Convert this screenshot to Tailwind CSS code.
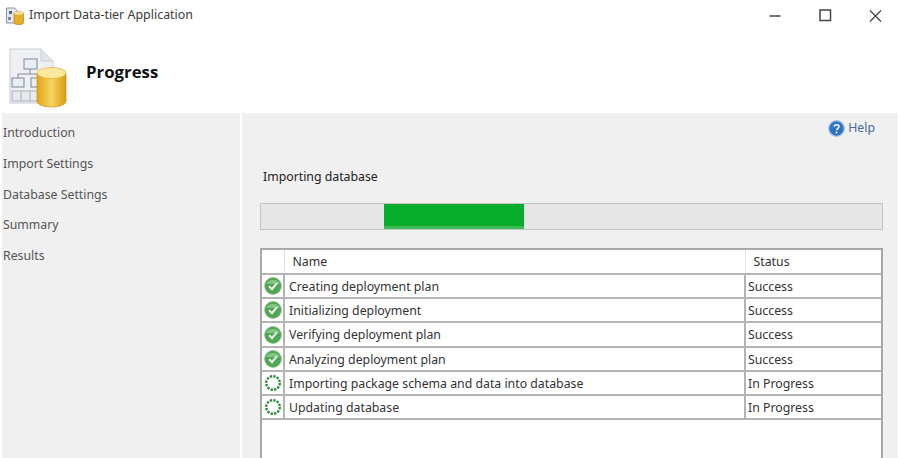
<!DOCTYPE html>
<html lang="en">
<head>
<meta charset="UTF-8">
<title>Import Data-tier Application</title>
<script src="https://cdn.jsdelivr.net/npm/@tailwindcss/browser@4"></script>
</head>
<body class="w-[900px] h-[458px] overflow-hidden bg-white font-['Noto_Sans',sans-serif] text-[12.3px] text-[#333]">
  <!-- title bar -->
  <div class="h-[31px] flex items-center pl-[6px]">
    <svg class="w-[18px] h-[18px]" viewBox="0 0 18 18">
      <path d="M.5 1h8l3 3v12H.5z" fill="#e4e8ee" stroke="#8a94a3"/>
      <rect x="3" y="4" width="3" height="3" fill="#4a6a9a"/>
      <rect x="2" y="10" width="3" height="3" fill="#6f89ad"/>
      <path d="M8 6c0-2 9.500-2 9.500 0v10c0 2-9.500 2-9.500 0z" fill="#e8ac25" stroke="#a87810" stroke-width=".6"/>
      <ellipse cx="12.750" cy="6" rx="4.750" ry="1.800" fill="#f8e39a"/>
    </svg>
    <span class="ml-[5px] text-[12.450px] text-[#3a3a3a]">Import Data-tier Application</span>
    <div class="ml-auto flex items-center gap-[4px] mr-[2px]">
      <svg class="w-[46px] h-[30px]" viewBox="0 0 46 30"><path d="M17.500 15h11" stroke="#444" stroke-width="1.500"/></svg>
      <svg class="w-[46px] h-[30px]" viewBox="0 0 46 30"><rect x="18" y="9" width="10.500" height="10.500" fill="none" stroke="#444" stroke-width="1.500"/></svg>
      <svg class="w-[46px] h-[30px]" viewBox="0 0 46 30"><path d="M18 9.500l11 11M29 9.500l-11 11" stroke="#444" stroke-width="1.200"/></svg>
    </div>
  </div>
  <!-- banner -->
  <div class="h-[82px] flex items-center pl-[9px]">
    <svg class="w-[58px] h-[60px] mt-[11px]" viewBox="0 0 58 60">
      <path d="M1 1h31l12 12v42H1z" fill="#eef0f3" stroke="#c9ccd1"/>
      <path d="M32 1v12h12" fill="#dfe2e6" stroke="#c9ccd1"/>
      <rect x="15" y="11" width="13" height="10" fill="#e8eef6" stroke="#7c8796"/>
      <path d="M21 21v5M9 26h24M9 26v4M33 26v4" stroke="#7c8796" fill="none"/>
      <rect x="3" y="30" width="12" height="9" fill="#e8eef6" stroke="#7c8796"/>
      <rect x="22" y="30" width="12" height="9" fill="#e8eef6" stroke="#7c8796"/>
      <path d="M3 43h27v10H3zM12 43v10M21 43v10" fill="#e8eaee" stroke="#a8afb9"/>
      <defs><linearGradient id="cyl" x1="0" x2="1" y1="0" y2="0"><stop offset="0" stop-color="#e2a516"/><stop offset=".5" stop-color="#f7d460"/><stop offset="1" stop-color="#d99b10"/></linearGradient></defs>
      <path d="M28 25v28c0 8 29 8 29 0V25z" fill="url(#cyl)" stroke="#c08c12" stroke-width=".6"/>
      <ellipse cx="42.500" cy="25" rx="14.500" ry="5.500" fill="#fbe99c" stroke="#d6a42a" stroke-width=".6"/>
    </svg>
    <span class="ml-[19px] font-['Open_Sans',sans-serif] font-bold text-[16.800px] text-[#111]">Progress</span>
  </div>
  <!-- body -->
  <div class="h-[345px] flex">
    <nav class="w-[238px] ml-[2px] mr-[2px] bg-[#f0f0f0] pt-[9px] pl-[1px] flex flex-col gap-[9.750px] text-[#555]">
      <a class="h-[21px] leading-[21px]">Introduction</a>
      <a class="h-[21px] leading-[21px]">Import Settings</a>
      <a class="h-[21px] leading-[21px]">Database Settings</a>
      <a class="h-[21px] leading-[21px]">Summary</a>
      <a class="h-[21px] leading-[21px]">Results</a>
    </nav>
    <main class="w-[656px] bg-[#f0f0f0] pl-[18px] pr-[15px] flex flex-col">
      <div class="h-[30px] flex items-center justify-end gap-[3px] pr-[8px] text-[#4a6a9e]">
        <svg class="w-[17px] h-[17px]" viewBox="0 0 17 17">
          <circle cx="8.500" cy="8.500" r="7.800" fill="#2f74c4" stroke="#a9c4e4" stroke-width="1.200"/>
          <path d="M6.200 6.600c.2-2.600 4.800-2.600 4.800 0 0 1.700-2.300 1.700-2.400 3.500" fill="none" stroke="#fff" stroke-width="1.500"/>
          <circle cx="8.500" cy="12.600" r="1" fill="#fff"/>
        </svg>
        <span>Help</span>
      </div>
      <div class="h-[20px] mt-[22px] ml-[3px] leading-[20px] text-[#222] translate-y-[2px]">Importing database</div>
      <div class="h-[27px] mt-[18px] border border-[#c4c4c4] bg-[#e6e6e6] pl-[123px]">
        <div class="w-[140px] h-[25px] bg-[#06ad2a] border-b-[3px] border-[#3bbd55]"></div>
      </div>
      <div class="mt-[18px] h-[210px] border-2 border-b-0 border-[#a8a8a8] bg-white">
        <table class="w-full border-collapse table-fixed">
          <colgroup><col class="w-[22px]"><col><col class="w-[136px]"></colgroup>
          <thead>
            <tr class="h-[24px] border-b-2 border-[#b4b4b4]">
              <th class="border-r border-[#e2e2e2]"></th>
              <th class="font-normal text-left pl-[8px] pt-[2px] border-r border-[#e2e2e2]">Name</th>
              <th class="font-normal text-left pl-[8px] pt-[2px]">Status</th>
            </tr>
          </thead>
          <tbody>
            <tr class="h-[24px] border-b-2 border-[#b4b4b4]">
              <td class="border-r-2 border-[#b4b4b4]"><svg class="w-[18px] h-[18px] mx-auto" viewBox="0 0 18 18"><circle cx="9" cy="9" r="8.400" fill="#4fa653" stroke="#8cc08e" stroke-width=".8"/><path d="M2 7a7.400 6 0 0 1 14 0z" fill="#a8d8a5" opacity=".6"/><path d="M5 9.200l3 3 5-6" fill="none" stroke="#eef6ee" stroke-width="2"/></svg></td>
              <td class="pl-[4px] pt-[2px] border-r-2 border-[#b4b4b4]">Creating deployment plan</td>
              <td class="pl-[2px] pt-[2px]">Success</td>
            </tr>
            <tr class="h-[24px] border-b-2 border-[#b4b4b4]">
              <td class="border-r-2 border-[#b4b4b4]"><svg class="w-[18px] h-[18px] mx-auto" viewBox="0 0 18 18"><circle cx="9" cy="9" r="8.400" fill="#4fa653" stroke="#8cc08e" stroke-width=".8"/><path d="M2 7a7.400 6 0 0 1 14 0z" fill="#a8d8a5" opacity=".6"/><path d="M5 9.200l3 3 5-6" fill="none" stroke="#eef6ee" stroke-width="2"/></svg></td>
              <td class="pl-[4px] pt-[2px] border-r-2 border-[#b4b4b4]">Initializing deployment</td>
              <td class="pl-[2px] pt-[2px]">Success</td>
            </tr>
            <tr class="h-[25px] border-b-2 border-[#b4b4b4]">
              <td class="border-r-2 border-[#b4b4b4]"><svg class="w-[18px] h-[18px] mx-auto" viewBox="0 0 18 18"><circle cx="9" cy="9" r="8.400" fill="#4fa653" stroke="#8cc08e" stroke-width=".8"/><path d="M2 7a7.400 6 0 0 1 14 0z" fill="#a8d8a5" opacity=".6"/><path d="M5 9.200l3 3 5-6" fill="none" stroke="#eef6ee" stroke-width="2"/></svg></td>
              <td class="pl-[4px] pt-[2px] border-r-2 border-[#b4b4b4]">Verifying deployment plan</td>
              <td class="pl-[2px] pt-[2px]">Success</td>
            </tr>
            <tr class="h-[24px] border-b-2 border-[#b4b4b4]">
              <td class="border-r-2 border-[#b4b4b4]"><svg class="w-[18px] h-[18px] mx-auto" viewBox="0 0 18 18"><circle cx="9" cy="9" r="8.400" fill="#4fa653" stroke="#8cc08e" stroke-width=".8"/><path d="M2 7a7.400 6 0 0 1 14 0z" fill="#a8d8a5" opacity=".6"/><path d="M5 9.200l3 3 5-6" fill="none" stroke="#eef6ee" stroke-width="2"/></svg></td>
              <td class="pl-[4px] pt-[2px] border-r-2 border-[#b4b4b4]">Analyzing deployment plan</td>
              <td class="pl-[2px] pt-[2px]">Success</td>
            </tr>
            <tr class="h-[24px] border-b-2 border-[#b4b4b4]">
              <td class="border-r-2 border-[#b4b4b4]"><svg class="w-[18px] h-[18px] mx-auto" viewBox="0 0 18 18"><circle cx="9" cy="9" r="6.800" fill="none" stroke="#2f8f3c" stroke-width="2.400" stroke-dasharray="2.400 1.160"/></svg></td>
              <td class="pl-[4px] pt-[2px] border-r-2 border-[#b4b4b4]">Importing package schema and data into database</td>
              <td class="pl-[2px] pt-[2px]">In Progress</td>
            </tr>
            <tr class="h-[24px] border-b-2 border-[#b4b4b4]">
              <td class="border-r-2 border-[#b4b4b4]"><svg class="w-[18px] h-[18px] mx-auto" viewBox="0 0 18 18"><circle cx="9" cy="9" r="6.800" fill="none" stroke="#2f8f3c" stroke-width="2.400" stroke-dasharray="2.400 1.160"/></svg></td>
              <td class="pl-[4px] pt-[2px] border-r-2 border-[#b4b4b4]">Updating database</td>
              <td class="pl-[2px] pt-[2px]">In Progress</td>
            </tr>
          </tbody>
        </table>
      </div>
    </main>
  </div>
</body>
</html>
